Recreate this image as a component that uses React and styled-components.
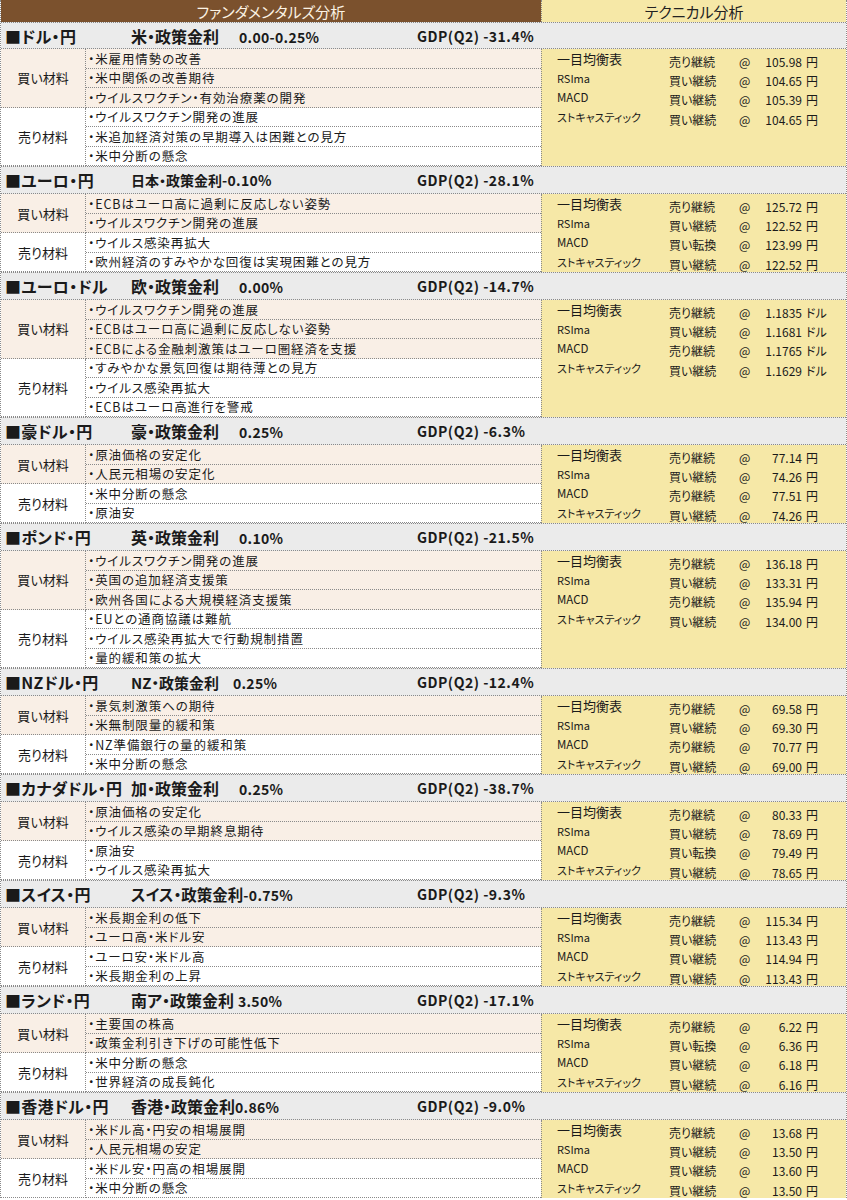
import React from "react";
import styled, { createGlobalStyle } from "styled-components";

const GlobalStyle = createGlobalStyle`
  html, body { margin: 0; padding: 0; background: #ffffff; }
  body {
    font-family: "Noto Sans CJK JP", "Noto Sans", "Liberation Sans", sans-serif;
    color: #1a1a1a;
  }
`;

const DOT = "1px dotted #8a8a8a";
const ROW_H = 19.5;

const Sheet = styled.div`
  width: 847px;
  box-sizing: border-box;
  border-left: ${DOT};
  border-right: ${DOT};
  font-feature-settings: "palt";
`;

const TitleBar = styled.div`
  display: grid;
  grid-template-columns: 540px 1fr;
  height: 22px;
`;

const TitleCell = styled.div`
  display: flex;
  align-items: center;
  justify-content: center;
  font-size: 15px;
  line-height: 1;
  background: ${(p) => (p.$tone === "brown" ? "#7b512d" : "#f6e8a7")};
  color: ${(p) => (p.$tone === "brown" ? "#fbf3e4" : "#222")};
  border-left: ${(p) => (p.$tone === "brown" ? "none" : DOT)};
`;

const BlockHeader = styled.div`
  display: flex;
  align-items: center;
  height: ${(p) => p.$h}px;
  box-sizing: border-box;
  background: #ebebeb;
  border-top: ${DOT};
  border-bottom: ${DOT};
  font-weight: 700;
  white-space: nowrap;
`;

const CurrencyName = styled.div`
  width: 126px;
  padding-left: 4px;
  font-size: 16px;
  letter-spacing: 0.3px;
`;

const RateCell = styled.div`
  width: 286px;
  display: flex;
  align-items: baseline;
  gap: ${(p) => p.$gap}px;
  font-size: ${(p) => p.$size}px;
`;

const RateValue = styled.span`
  font-size: 14px;
  letter-spacing: 0.3px;
`;

const Gdp = styled.div`
  font-size: 14px;
  letter-spacing: 0.5px;
`;

const BlockBody = styled.div`
  display: grid;
  grid-template-columns: 540px 1fr;
`;

const Fundamentals = styled.div`
  display: flex;
  flex-direction: column;
`;

const Group = styled.div`
  display: grid;
  grid-template-columns: 85px 1fr;
  background: ${(p) => (p.$buy ? "#f9efe6" : "#ffffff")};
`;

const GroupLabel = styled.div`
  display: flex;
  align-items: center;
  justify-content: center;
  box-sizing: border-box;
  border-right: ${DOT};
  border-bottom: ${DOT};
  font-size: 13px;
`;

const ReasonList = styled.div`
  display: flex;
  flex-direction: column;
`;

const Reason = styled.div`
  height: ${ROW_H}px;
  box-sizing: border-box;
  display: flex;
  align-items: center;
  padding-left: 2px;
  font-size: 12.5px;
  letter-spacing: 0.9px;
  white-space: nowrap;
  border-bottom: ${DOT};
`;

const TechPanel = styled.div`
  background: #f6e8a7;
  border-left: ${DOT};
  padding-left: 15px;
  display: flex;
  flex-direction: column;
`;

const TechLine = styled.div`
  height: ${ROW_H}px;
  display: grid;
  grid-template-columns: 112px 70px 14px 49px auto;
  align-items: center;
  font-size: 12px;
  white-space: nowrap;
`;

const TechLabel = styled.div`
  font-size: ${(p) => p.$size}px;
  padding-bottom: 2px;
`;

const TechCell = styled.div`
  padding-top: 3px;
  text-align: ${(p) => (p.$right ? "right" : "left")};
  padding-left: ${(p) => p.$pl || 0}px;
`;

const labelSizes = { 一目均衡表: 13, RSIma: 11, MACD: 11.5, ストキャスティック: 11 };
const techNames = ["一目均衡表", "RSIma", "MACD", "ストキャスティック"];

const blocks = [
  {
    cur: "■ドル・円", rate: "米・政策金利", val: "0.00-0.25%", size: 16, gap: 20, gdp: "GDP(Q2) -31.4%",
    buy: ["米雇用情勢の改善", "米中関係の改善期待", "ウイルスワクチン・有効治療薬の開発"],
    sell: ["ウイルスワクチン開発の進展", "米追加経済対策の早期導入は困難との見方", "米中分断の懸念"],
    unit: "円",
    tech: [["売り継続", "105.98"], ["買い継続", "104.65"], ["買い継続", "105.39"], ["買い継続", "104.65"]],
  },
  {
    cur: "■ユーロ・円", rate: "日本・政策金利", val: "-0.10%", size: 14, gap: 0, gdp: "GDP(Q2) -28.1%",
    buy: ["ECBはユーロ高に過剰に反応しない姿勢", "ウイルスワクチン開発の進展"],
    sell: ["ウイルス感染再拡大", "欧州経済のすみやかな回復は実現困難との見方"],
    unit: "円",
    tech: [["売り継続", "125.72"], ["買い継続", "122.52"], ["買い転換", "123.99"], ["買い継続", "122.52"]],
  },
  {
    cur: "■ユーロ・ドル", rate: "欧・政策金利", val: "0.00%", size: 16, gap: 20, gdp: "GDP(Q2) -14.7%",
    buy: ["ウイルスワクチン開発の進展", "ECBはユーロ高に過剰に反応しない姿勢", "ECBによる金融刺激策はユーロ圏経済を支援"],
    sell: ["すみやかな景気回復は期待薄との見方", "ウイルス感染再拡大", "ECBはユーロ高進行を警戒"],
    unit: "ドル",
    tech: [["売り継続", "1.1835"], ["買い継続", "1.1681"], ["売り継続", "1.1765"], ["買い継続", "1.1629"]],
  },
  {
    cur: "■豪ドル・円", rate: "豪・政策金利", val: "0.25%", size: 16, gap: 20, gdp: "GDP(Q2) -6.3%",
    buy: ["原油価格の安定化", "人民元相場の安定化"],
    sell: ["米中分断の懸念", "原油安"],
    unit: "円",
    tech: [["売り継続", "77.14"], ["買い継続", "74.26"], ["売り継続", "77.51"], ["買い継続", "74.26"]],
  },
  {
    cur: "■ポンド・円", rate: "英・政策金利", val: "0.10%", size: 16, gap: 20, gdp: "GDP(Q2) -21.5%",
    buy: ["ウイルスワクチン開発の進展", "英国の追加経済支援策", "欧州各国による大規模経済支援策"],
    sell: ["EUとの通商協議は難航", "ウイルス感染再拡大で行動規制措置", "量的緩和策の拡大"],
    unit: "円",
    tech: [["売り継続", "136.18"], ["買い継続", "133.31"], ["売り継続", "135.94"], ["買い継続", "134.00"]],
  },
  {
    cur: "■NZドル・円", rate: "NZ・政策金利", val: "0.25%", size: 15, gap: 14, gdp: "GDP(Q2) -12.4%",
    buy: ["景気刺激策への期待", "米無制限量的緩和策"],
    sell: ["NZ準備銀行の量的緩和策", "米中分断の懸念"],
    unit: "円",
    tech: [["売り継続", "69.58"], ["買い継続", "69.30"], ["売り継続", "70.77"], ["買い継続", "69.00"]],
  },
  {
    cur: "■カナダドル・円", rate: "加・政策金利", val: "0.25%", size: 16, gap: 20, gdp: "GDP(Q2) -38.7%",
    buy: ["原油価格の安定化", "ウイルス感染の早期終息期待"],
    sell: ["原油安", "ウイルス感染再拡大"],
    unit: "円",
    tech: [["売り継続", "80.33"], ["買い継続", "78.69"], ["買い転換", "79.49"], ["買い継続", "78.65"]],
  },
  {
    cur: "■スイス・円", rate: "スイス・政策金利", val: "-0.75%", size: 15.5, gap: 0, gdp: "GDP(Q2) -9.3%",
    buy: ["米長期金利の低下", "ユーロ高・米ドル安"],
    sell: ["ユーロ安・米ドル高", "米長期金利の上昇"],
    unit: "円",
    tech: [["売り継続", "115.34"], ["買い継続", "113.43"], ["買い継続", "114.94"], ["買い継続", "113.43"]],
  },
  {
    cur: "■ランド・円", rate: "南ア・政策金利", val: "3.50%", size: 16, gap: 4, gdp: "GDP(Q2) -17.1%",
    buy: ["主要国の株高", "政策金利引き下げの可能性低下"],
    sell: ["米中分断の懸念", "世界経済の成長鈍化"],
    unit: "円",
    tech: [["売り継続", "6.22"], ["買い転換", "6.36"], ["買い継続", "6.18"], ["買い継続", "6.16"]],
  },
  {
    cur: "■香港ドル・円", rate: "香港・政策金利", val: "0.86%", size: 16, gap: 0, gdp: "GDP(Q2) -9.0%",
    buy: ["米ドル高・円安の相場展開", "人民元相場の安定"],
    sell: ["米ドル安・円高の相場展開", "米中分断の懸念"],
    unit: "円",
    tech: [["売り継続", "13.68"], ["買い継続", "13.50"], ["買い継続", "13.60"], ["買い継続", "13.50"]],
  },
];

function ReasonGroup({ buy, label, items }) {
  return (
    <Group $buy={buy}>
      <GroupLabel>{label}</GroupLabel>
      <ReasonList>
        {items.map((t, i) => (
          <Reason key={i}>・{t}</Reason>
        ))}
      </ReasonList>
    </Group>
  );
}

function Block({ data, first }) {
  return (
    <>
      <BlockHeader $h={first ? 27 : 28}>
        <CurrencyName>{data.cur}</CurrencyName>
        <RateCell $gap={data.gap} $size={data.size}>
          <span>{data.rate}</span>
          <RateValue>{data.val}</RateValue>
        </RateCell>
        <Gdp>{data.gdp}</Gdp>
      </BlockHeader>
      <BlockBody>
        <Fundamentals>
          <ReasonGroup buy label="買い材料" items={data.buy} />
          <ReasonGroup label="売り材料" items={data.sell} />
        </Fundamentals>
        <TechPanel>
          {data.tech.map(([sig, price], i) => (
            <TechLine key={i}>
              <TechLabel $size={labelSizes[techNames[i]]}>{techNames[i]}</TechLabel>
              <TechCell>{sig}</TechCell>
              <TechCell>@</TechCell>
              <TechCell $right>{price}</TechCell>
              <TechCell $pl={4}>{data.unit}</TechCell>
            </TechLine>
          ))}
        </TechPanel>
      </BlockBody>
    </>
  );
}

export default function App() {
  return (
    <>
      <GlobalStyle />
      <Sheet>
        <TitleBar>
          <TitleCell $tone="brown">ファンダメンタルズ分析</TitleCell>
          <TitleCell $tone="yellow">テクニカル分析</TitleCell>
        </TitleBar>
        {blocks.map((b, i) => (
          <Block key={i} data={b} first={i === 0} />
        ))}
      </Sheet>
    </>
  );
}
